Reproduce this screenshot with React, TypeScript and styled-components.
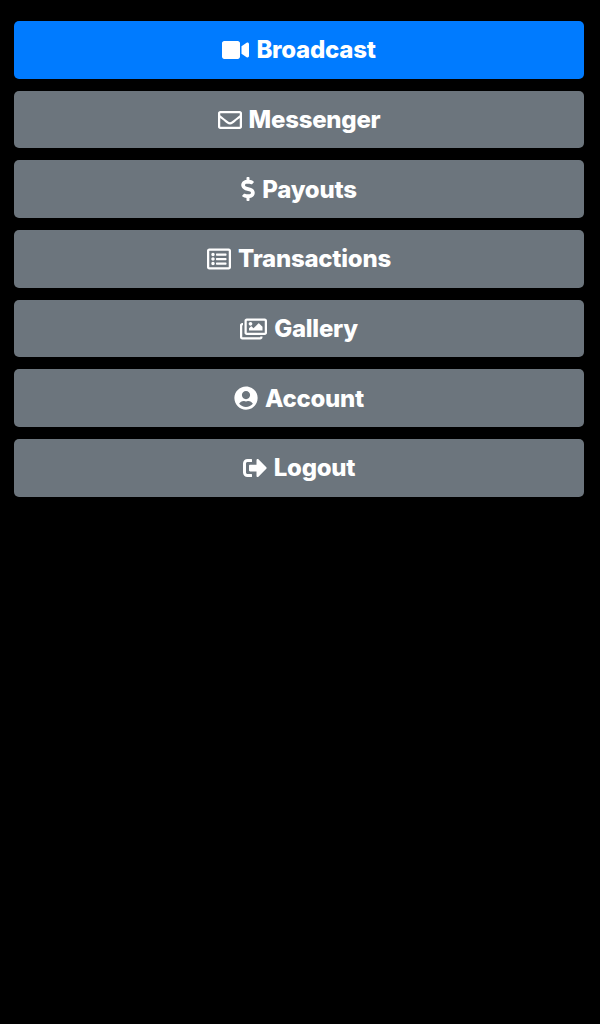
import React from "react";
import styled, { createGlobalStyle } from "styled-components";
import {
  FaVideo,
  FaRegEnvelope,
  FaDollarSign,
  FaRegListAlt,
  FaRegImages,
  FaUserCircle,
  FaSignOutAlt,
} from "react-icons/fa";

const GlobalStyle = createGlobalStyle`
  html, body {
    margin: 0;
    padding: 0;
    background: #000;
    font-family: Inter, "Liberation Sans", sans-serif;
  }
`;

const Page = styled.div`
  width: 600px;
  height: 1024px;
  box-sizing: border-box;
  padding: 21px 16px 0 14px;
  background: #000;
`;

const Menu = styled.nav`
  display: grid;
  grid-auto-rows: 57.7px;
  row-gap: 12px;
`;

const MenuButton = styled.button<{ $primary?: boolean; $iconWidth: number }>`
  display: flex;
  align-items: center;
  justify-content: center;
  gap: 7px;
  border: 0;
  border-radius: 5px;
  padding: 0;
  background: ${(p) => (p.$primary ? "#007bff" : "#6c757d")};
  color: #fff;
  font-family: inherit;
  font-size: 24px;
  font-weight: 800;
  letter-spacing: -0.25px;
  svg {
    flex: none;
    width: ${(p) => p.$iconWidth}px;
    height: 24px;
  }
`;

const items = [
  { label: "Broadcast", Icon: FaVideo, iconWidth: 27, primary: true },
  { label: "Messenger", Icon: FaRegEnvelope, iconWidth: 24 },
  { label: "Payouts", Icon: FaDollarSign, iconWidth: 14 },
  { label: "Transactions", Icon: FaRegListAlt, iconWidth: 24 },
  { label: "Gallery", Icon: FaRegImages, iconWidth: 27 },
  { label: "Account", Icon: FaUserCircle, iconWidth: 24 },
  { label: "Logout", Icon: FaSignOutAlt, iconWidth: 24 },
];

export default function App() {
  return (
    <>
      <GlobalStyle />
      <Page>
        <Menu>
          {items.map(({ label, Icon, iconWidth, primary }) => (
            <MenuButton key={label} $primary={primary} $iconWidth={iconWidth}>
              <Icon />
              {label}
            </MenuButton>
          ))}
        </Menu>
      </Page>
    </>
  );
}
